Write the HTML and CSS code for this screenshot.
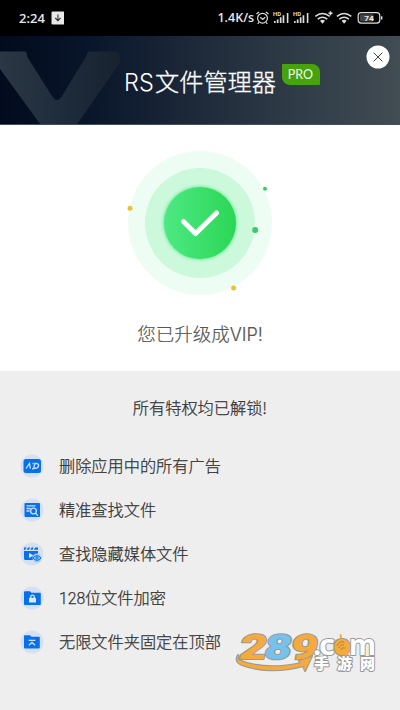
FILE: index.html
```html
<!DOCTYPE html>
<html lang="zh-CN">
<head>
<meta charset="utf-8">
<title>RS文件管理器</title>
<link rel="stylesheet" href="styles.css">
</head>
<body>
<main class="screen">
  <div class="status">
    <span class="clock">2:24</span>
    <svg class="download" width="14" height="14" viewBox="0 0 14 14"><rect x=".5" y=".5" width="13" height="13" rx="1.2" fill="#e8e8e8"/><path d="M7 3.500v6M4.300 7l2.700 2.700L9.700 7" fill="none" stroke="#333" stroke-width="1.100"/></svg>
    <span class="speed">1.4K/s</span>
    <svg class="indicators" width="130" height="20" viewBox="0 0 130 20">
      <g fill="none" stroke="#ddd" stroke-width="1.2">
        <circle cx="7.500" cy="10.200" r="4.900"/><path d="M5.300 9.300l2.400 2.200 2.400-2.200M1.500 6l2.600-2M13.500 6l-2.600-2M4 14.400 2.700 15.800M11 14.400l1.300 1.400"/>
      </g>
      <g fill="#ddd">
        <text x="18" y="7.500" class="hd" textLength="8" lengthAdjust="spacingAndGlyphs">HD</text>
        <path d="M19 13h1.600v2H19zm2.800-1.400h1.700V15h-1.700zm3-2.400h1.700V15h-1.700zm2.800-2h1.700V15h-1.700zM31.800 5h1.600v10h-1.600z"/>
        <text x="38" y="7.500" class="hd" textLength="8" lengthAdjust="spacingAndGlyphs">HD</text>
        <path d="M39 13h1.600v2H39zm2.800-1.400h1.700V15h-1.700zm3-2.400h1.700V15h-1.700zm2.800-2h1.700V15h-1.700zM51.800 5h1.600v10h-1.600z"/>
        <path d="M65 12.700l2.500 3 2.500-3q-2.500-1.800-5 0zM86.600 12.700l2.500 3 2.500-3q-2.500-1.800-5 0z"/>
      </g>
      <g fill="none" stroke="#ddd" stroke-width="1.5">
        <path d="M60.300 8.400q7.200-5.800 14.400 0M62.700 11.100q4.800-3.700 9.600 0M81.900 8.400q7.200-5.800 14.400 0M84.300 11.100q4.800-3.700 9.600 0M73.500 5.200h4M75.500 3.200v4"/>
        <rect x="103.200" y="4.700" width="21.600" height="10.400" rx="3" stroke-width="1.2"/>
      </g>
      <rect x="104.800" y="6.200" width="14" height="7.400" rx="1.500" fill="#444"/>
      <path d="M126 8.200h1.400v3.400H126z" fill="#ddd"/>
      <text x="109.300" y="12.900" class="charge" textLength="9.500" lengthAdjust="spacingAndGlyphs">74</text>
    </svg>
  </div>
  <header class="hero">
    <svg class="mark" width="125" height="90" viewBox="0 0 125 90"><defs><linearGradient id="v" x1="0" y1="0" x2="1" y2="0"><stop offset="0" stop-color="#2b3743"/><stop offset=".55" stop-color="#1e2b3b"/><stop offset="1" stop-color="#18222f"/></linearGradient></defs><path d="M0 15.500h25q2 0 2 4l1 2.500 24 38q5 8 10 0L87 19q0-3.500 3-3.500h28q5 6 0 14L79 85.500 76 90H42L38 85 0 33z" fill="url(#v)"/></svg>
    <h1 class="title"><span class="brand">RS</span>文件管理器</h1>
    <span class="pro">PRO</span>
    <svg class="close" width="24" height="24" viewBox="0 0 24 24"><circle cx="12" cy="12" r="11.500" fill="#fff"/><path d="m7.600 7.600 8.800 8.800m0-8.800-8.800 8.800" stroke="#444" stroke-width="1"/></svg>
  </header>
  <section class="success">
    <svg class="badge" width="150" height="150" viewBox="0 0 150 150">
      <defs><linearGradient id="g"><stop stop-color="#4de983"/><stop offset="1" stop-color="#2bd654"/></linearGradient><filter id="glow" x="-20%" y="-20%" width="140%" height="140%"><feGaussianBlur stdDeviation="1.500"/></filter></defs>
      <circle cx="75" cy="75" r="72" fill="#eefdf4"/><circle cx="75" cy="75" r="55" fill="#ccf8dc"/>
      <circle cx="75" cy="75" r="37" fill="#72ee9c" filter="url(#glow)"/><circle cx="75" cy="75" r="36" fill="url(#g)"/>
      <path d="m58.500 73.500 12 12L91.500 65" fill="none" stroke="#fff" stroke-width="5.200" stroke-linecap="round" stroke-linejoin="round"/>
      <circle cx="5" cy="60.200" r="2.500" fill="#edc22e"/><circle cx="108.600" cy="140" r="2.500" fill="#edc22e"/><circle cx="130.200" cy="82" r="3" fill="#3acb69"/><circle cx="140" cy="40.700" r="2" fill="#3acb69"/>
    </svg>
    <p class="message">您已升级成<span class="vip">VIP!</span></p>
  </section>
  <section class="benefits">
    <h2 class="heading">所有特权均已解锁!</h2>
    <ul class="list">
      <li class="row"><svg class="icon" viewBox="0 0 24 24"><circle class="halo" cx="12" cy="12" r="11.500"/><rect class="blue" x="3.500" y="5" width="17.500" height="14" rx="2.500"/><path class="line" d="m6 14.500 3.500-5 .8 5M12 14.800h1.500M12.500 9.500h1.200M15 9.400h.6q3.400 0 3 2.500t-4 2.500h-1z"/></svg><span class="label">删除应用中的所有广告</span></li>
      <li class="row"><svg class="icon" viewBox="0 0 24 24"><circle class="halo" cx="12" cy="12" r="11.500"/><rect class="blue" x="4.500" y="5" width="15.500" height="14" rx="1"/><path class="line" d="M6.500 7.800h9M6.500 10.500h4M6.500 13h3"/><circle class="line" cx="13.500" cy="13" r="2.900"/><path class="line" d="m15.500 15.200 2.300 2.400"/></svg><span class="label">精准查找文件</span></li>
      <li class="row"><svg class="icon" viewBox="0 0 24 24"><circle class="halo" cx="12" cy="12" r="11.500"/><path class="blue" d="M4 5.500h14v2.300H4zM4 9h14v9H5.500Q4 18 4 16.500z"/><path class="line" d="m7.500 5-1.600 3m5.200-3L9.500 8m5.200-3-1.600 3"/><path class="pale" d="m9 11 4.500 2.500L9 16z"/><circle cx="17" cy="16" r="4.500" class="paleblue"/><path d="M13 16q4-4.800 8 0-4 4.800-8 0z" class="blueline"/><circle class="blueline" cx="17" cy="16" r="1.200"/></svg><span class="label">查找隐藏媒体文件</span></li>
      <li class="row"><svg class="icon" viewBox="0 0 24 24"><circle class="halo" cx="12" cy="12" r="11.500"/><path class="blue" d="M4 6q0-.8.800-.8H10l1.500 1.600H20q.8 0 .8.800v10.600q0 .8-.8.800H4.800q-.8 0-.8-.8z"/><rect class="pale" x="9" y="11.700" width="7" height="4.800" rx=".6"/><path class="line" d="M10.700 12v-1.300q0-1.500 1.800-1.500t1.800 1.500V12"/></svg><span class="label"><span class="num">128</span>位文件加密</span></li>
      <li class="row"><svg class="icon" viewBox="0 0 24 24"><circle class="halo" cx="12" cy="12" r="11.500"/><path class="blue" d="M4 6q0-.8.800-.8H10l1.500 1.600H19q.8 0 .8.800v10q0 .8-.8.800H4.800q-.8 0-.8-.8z"/><path class="line" d="M8.700 10.300h6.600M9 15.200l3-2.800 3 2.800"/></svg><span class="label">无限文件夹固定在顶部</span></li>
    </ul>
  </section>
  <svg class="watermark" width="150" height="45" viewBox="0 0 150 45">
    <g class="outline">
      <path class="swoosh" d="M4 24Q0 31 8 34q28 10 61 1l2 5 7-15-13 5 2 2Q32 40 4 29z"/>
      <g transform="skewX(-10)">
        <text class="digits" x="9" y="28" textLength="27" lengthAdjust="spacingAndGlyphs">2</text>
        <text class="digits" x="60" y="28" textLength="27" lengthAdjust="spacingAndGlyphs">9</text>
        <text class="digits sky" x="34" y="28" textLength="27" lengthAdjust="spacingAndGlyphs">8</text>
      </g>
      <text class="white com" x="79" y="23.500">.</text>
      <text class="white com" x="85" y="23.500" textLength="16" lengthAdjust="spacingAndGlyphs">c</text>
      <text class="white com" x="115" y="23.500" textLength="27" lengthAdjust="spacingAndGlyphs">m</text>
      <text class="com" x="99" y="23.500" textLength="18" lengthAdjust="spacingAndGlyphs">o</text>
      <path class="plain" d="M108 10a6 6 0 1 0 .1 0M105.500 3l2 .5.500 4h-2zM111 20l5 5h-4z"/>
      <path class="arcs" d="M103 15q2-5 7-4M105 17q1-4 5-3M107 19q0-3 4-2"/>
      <text class="white site" x="80" y="37.500">手</text>
      <text class="white site" x="103" y="37.500">游</text>
      <text class="white site" x="126" y="37.500">网</text>
    </g>
  </svg>
</main>
</body>
</html>
```
FILE: styles.css
```css
* { box-sizing: border-box; }
body { margin: 0; background: #eee; font-family: "Noto Sans CJK SC", sans-serif; }
.screen { position: relative; width: 400px; height: 710px; overflow: hidden; background: #eee; }
.status { height: 36px; display: flex; align-items: center; padding: 0 15px 0 19px; background: #000; color: #e6e6e6; font: 600 13px/36px "Open Sans", sans-serif; }
.clock { width: 32px; font-size: 13px; }
.speed { margin-left: 153px; width: 38px; white-space: nowrap; font-size: 12.5px; }
.indicators { flex: none; }
.hd { font: 700 5px Roboto, sans-serif; }
.charge { font: 700 8px Roboto, sans-serif; fill: #eee; }
.hero { position: relative; height: 89px; overflow: hidden; display: flex; justify-content: center; background: linear-gradient(90deg, #020b1d 0%, #09152a 22%, #1d2939 48%, #303c47 75%, #414c53 100%); border-bottom: 1px solid #45505c; }
.mark { position: absolute; left: 0; top: 0; }
.title { position: relative; margin: 0; font-weight: 300; font-size: 24.2px; line-height: 90px; color: #fff; white-space: nowrap; -webkit-text-stroke: .3px #fff; }
.brand { display: inline-block; width: 31px; font: 300 23.5px Inter, sans-serif; -webkit-text-stroke: 0; }
.pro { position: absolute; left: 281.5px; top: 28px; width: 38px; height: 21px; border-radius: 1px 8px 1px 8px; background: #46a30e; color: #f2fbe9; font: 400 12.5px/21px Lato, sans-serif; text-align: center; }
.close { position: absolute; left: 366px; top: 9px; }
.success { height: 246px; padding-top: 23px; background: #fff; text-align: center; }
.badge { display: block; margin: 0 auto; }
.message { margin: 20px 0 0; font-weight: 300; font-size: 18.5px; line-height: 30px; color: #555; white-space: nowrap; -webkit-text-stroke: .2px #555; }
.vip { font: 300 18px Inter, sans-serif; }
.benefits { height: 339px; padding-top: 25px; }
.heading { margin: 0; text-align: center; font-weight: 300; font-size: 16.2px; line-height: 23px; color: #333; -webkit-text-stroke: .25px #333; }
.list { list-style: none; margin: 25px 0 0; padding: 0 0 0 20px; }
.row { height: 44px; display: flex; align-items: center; font-weight: 300; font-size: 16.2px; color: #333; -webkit-text-stroke: .25px #333; }
.icon { width: 24px; height: 24px; margin-right: 15px; flex: none; }
.label { padding-bottom: 2px; }
.num { display: inline-block; width: 26px; font: 300 15.8px Roboto, sans-serif; }
.halo { fill: #d5e1f3; }
.blue { fill: #0870e8; }
.pale { fill: #dceaff; }
.paleblue { fill: #a6cdf9; }
.line { fill: none; stroke: #cfe3ff; stroke-width: 1.3; }
.blueline { fill: none; stroke: #0870e8; stroke-width: 1; }
.watermark { position: absolute; left: 234px; top: 631px; }
.outline { paint-order: stroke; stroke: #999; stroke-width: 2px; stroke-linejoin: round; fill: #f5aa3b; }
.digits { font: 900 34.5px Roboto, sans-serif; }
.sky { fill: #77c2ec; }
.white { fill: #fff; }
.plain { stroke: none; }
.arcs { fill: none; stroke: #a98545; stroke-width: 1; }
.com { font: 700 29px "Open Sans", sans-serif; }
.site { font: 900 15px "Noto Sans CJK SC", sans-serif; }
```
